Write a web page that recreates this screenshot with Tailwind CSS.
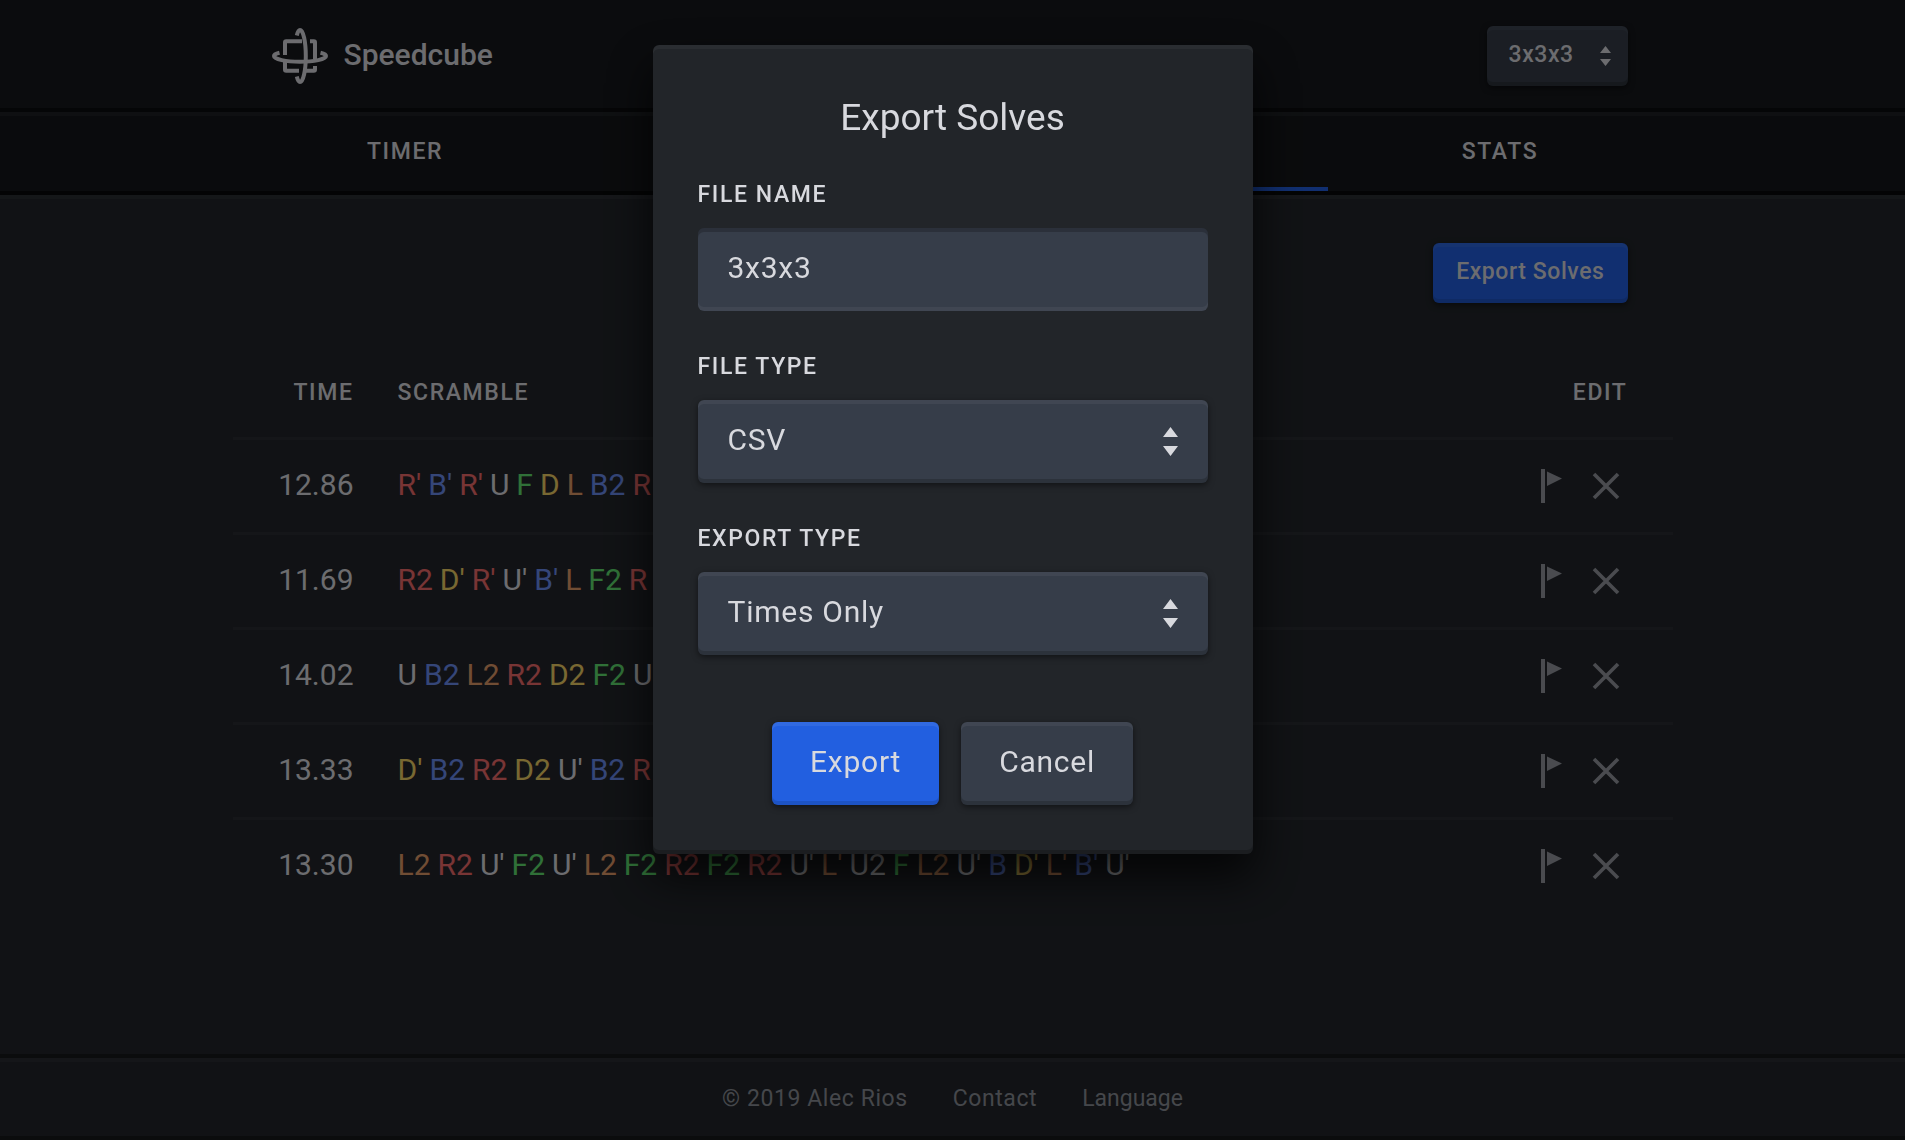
<!DOCTYPE html>
<html lang="en">
<head>
<meta charset="utf-8">
<meta name="viewport" content="width=device-width, initial-scale=1">
<title>Speedcube</title>
<script src="https://cdn.jsdelivr.net/npm/@tailwindcss/browser@4"></script>
</head>
<body class="bg-[#22252a] font-[Roboto,sans-serif] text-[#d8d9de]">
<div class="flex min-h-screen flex-col">
  <header class="h-28 bg-[#16181c] shadow-[inset_0_-4px_0_#0b0c0e]">
    <div class="mx-auto flex h-full max-w-[1440px] items-center justify-between pr-[45px] pl-[39px]">
      <a href="#" class="flex items-center gap-4">
        <svg class="size-14" viewBox="10 8 56 56" fill="none" stroke="currentColor" stroke-width="4" aria-hidden="true">
          <path d="M34.8 15.5C35.6 12 36.6 10 38 10C41.3 10 43.8 22 43.8 36C43.8 50 41.3 62 38 62C36.6 62 35.6 60 34.8 56.5"/>
          <path d="M17.5 32.8C14 33.6 12 34.6 12 36C12 39.3 24 41.8 38 41.8C52 41.8 64 39.3 64 36C64 34.6 62 33.6 58.5 32.8"/>
          <path d="M23 35V22.5Q23 21.3 24.2 21.3H40"/>
          <path d="M48 21.3H51.8Q53 21.3 53 22.5V39"/>
          <path d="M53 46V49.5Q53 50.7 51.8 50.7H43"/>
          <path d="M23 42V49.5Q23 50.7 24.2 50.7H37"/>
        </svg>
        <span class="pb-0.5 text-[30px] leading-10 font-medium">Speedcube</span>
      </a>
      <div class="relative">
        <select aria-label="Puzzle" class="block h-[60px] w-[141px] appearance-none rounded-md bg-[#363d49] pr-10 pb-0.5 pl-[22px] text-[23px] font-medium tracking-wide shadow-[inset_0_4px_0_#ffffff0a,inset_0_-4px_0_#0000002e,0_2px_6px_#00000080]"><option>3x3x3</option></select>
        <svg class="pointer-events-none absolute top-5 right-[17px] h-5 w-[11px]" viewBox="0 0 11 20" fill="currentColor" aria-hidden="true"><path d="M0 7L5.500 0L11 7ZM0 13L5.500 20L11 13Z"/></svg>
      </div>
    </div>
  </header>
  <nav class="h-[83px] bg-[#15171a] shadow-[inset_0_4px_0_#1e2124,inset_0_-4px_0_#08090a]">
    <div class="mx-auto grid h-full max-w-[1440px] grid-cols-[23fr_25fr_25fr_23fr] text-[23px] font-medium tracking-[0.07em] uppercase">
      <a href="#" class="flex items-center justify-center pb-0.5">Timer</a>
      <a href="#" class="flex items-center justify-center pb-0.5">Sessions</a>
      <a href="#" aria-current="page" class="mb-1 flex items-center justify-center border-b-4 border-[#225fe0]">Solves</a>
      <a href="#" class="flex items-center justify-center pb-0.5">Stats</a>
    </div>
  </nav>
  <main class="grow shadow-[inset_0_4px_0_#2b2e33]">
    <div class="mx-auto max-w-[1440px] pt-12">
      <div class="flex justify-end pr-[45px]">
        <button class="h-[60px] rounded-md bg-[#225fe0] px-[23px] pb-0.5 text-[23px] font-medium tracking-wide shadow-[inset_0_4px_0_#ffffff0d,inset_0_-4px_0_#0000001a,0_2px_6px_#00000080]">Export Solves</button>
      </div>
      <table class="mt-11 w-full text-left">
        <thead>
          <tr class="h-[91px] text-[23px] tracking-[0.07em] uppercase">
            <th class="w-[143px] pt-0.5 pr-[22px] text-right font-medium">Time</th>
            <th class="pt-0.5 pl-[22px] font-medium">Scramble</th>
            <th class="w-[180px] pt-0.5 pr-[45px] text-right font-medium">Edit</th>
          </tr>
        </thead>
        <tbody id="solves" class="text-[30px] leading-10"></tbody>
      </table>
    </div>
  </main>
  <footer class="flex h-[86px] items-center justify-center gap-[45px] pt-1 text-[23px] text-[#8b8e96] shadow-[inset_0_4px_0_#16181b,inset_0_8px_0_#2b2d33,inset_0_-4px_0_#16181b]">
    <span class="tracking-wide">© 2019 Alec Rios</span>
    <a href="#" class="tracking-wide">Contact</a>
    <a href="#">Language</a>
  </footer>
</div>

<div class="fixed inset-0 flex items-start justify-center bg-black/50 pt-[45px]">
  <form role="dialog" aria-modal="true" aria-labelledby="export-title" class="flex w-[600px] flex-col rounded-md bg-[#222529] px-[45px] py-[49px] shadow-[inset_0_4px_0_#ffffff0a,inset_0_-4px_0_#00000033,0_22px_45px_#000000bf]">
    <h2 id="export-title" class="text-center text-[37px] leading-[48px]">Export Solves</h2>
    <label for="name" class="mt-[34px] text-[23px] leading-[38px] font-medium tracking-[0.07em] uppercase">File name</label>
    <input id="name" value="3x3x3" class="mt-3.5 h-[83px] rounded-md bg-[#363d49] px-[30px] pb-1 text-[30px] tracking-wide shadow-[inset_0_4px_0_#00000033,inset_0_-4px_0_#ffffff0d]">
    <label for="type" class="mt-[37px] text-[23px] leading-[38px] font-medium tracking-[0.07em] uppercase">File type</label>
    <div class="relative mt-3.5">
      <select id="type" class="block h-[83px] w-full appearance-none rounded-md bg-[#363d49] px-[30px] pb-1 text-[30px] tracking-wide shadow-[inset_0_4px_0_#ffffff0d,inset_0_-4px_0_#0000002e,0_2px_6px_#00000080]"><option>CSV</option></select>
      <svg class="pointer-events-none absolute top-[27px] right-[30px] h-[29px] w-[15px]" viewBox="0 0 15 29" fill="currentColor" aria-hidden="true"><path d="M0 10L7.500 0L15 10ZM0 19L7.500 29L15 19Z"/></svg>
    </div>
    <label for="export" class="mt-[37px] text-[23px] leading-[38px] font-medium tracking-[0.07em] uppercase">Export type</label>
    <div class="relative mt-3.5">
      <select id="export" class="block h-[83px] w-full appearance-none rounded-md bg-[#363d49] px-[30px] pb-1 text-[30px] tracking-wide shadow-[inset_0_4px_0_#ffffff0d,inset_0_-4px_0_#0000002e,0_2px_6px_#00000080]"><option>Times Only</option></select>
      <svg class="pointer-events-none absolute top-[27px] right-[30px] h-[29px] w-[15px]" viewBox="0 0 15 29" fill="currentColor" aria-hidden="true"><path d="M0 10L7.500 0L15 10ZM0 19L7.500 29L15 19Z"/></svg>
    </div>
    <div class="mt-[67px] flex justify-center gap-[22px]">
      <button type="button" class="h-[83px] rounded-md bg-[#225fe0] px-[38px] pb-1 text-[30px] tracking-wide shadow-[inset_0_4px_0_#ffffff12,inset_0_-4px_0_#0000001f,0_2px_6px_#00000080]">Export</button>
      <button type="button" class="h-[83px] rounded-md bg-[#363d49] px-[38px] pb-1 text-[30px] tracking-wide shadow-[inset_0_4px_0_#ffffff0d,inset_0_-4px_0_#0000002e,0_2px_6px_#00000080]">Cancel</button>
    </div>
  </form>
</div>

<script>
  const solves = [
    ["12.86", "R' B' R' U F D L B2 R"],
    ["11.69", "R2 D' R' U' B' L F2 R"],
    ["14.02", "U B2 L2 R2 D2 F2 U'"],
    ["13.33", "D' B2 R2 D2 U' B2 R"],
    ["13.30", "L2 R2 U' F2 U' L2 F2 R2 F2 R2 U' L' U2 F L2 U' B D' L' B' U'"]
  ];
  const faces = { R: "text-[#f06a6a]", B: "text-[#6a8cf0]", U: "", F: "text-[#60e070]", D: "text-[#f0d064]", L: "text-[#e09a68]" };
  document.getElementById("solves").innerHTML = solves.map(([time, moves]) => `
    <tr class="h-[95px] border-t-3 border-[#2a2d32]">
      <td class="pr-[22px] pb-0.5 text-right">${time}</td>
      <td class="pb-0.5 pl-[22px]"><div class="flex gap-[7px]">${moves.split(" ").map(m => `<span class="${faces[m[0]]}">${m}</span>`).join(" ")}</div></td>
      <td class="pr-[53px]">
        <div class="flex items-center justify-end gap-[30px] text-[#94969f]">
          <button aria-label="Flag"><svg class="h-[34px] w-[21px]" viewBox="0 0 21 34" fill="currentColor"><path d="M0 0H4V34H0ZM6 2.500L21 9.500L6 17Z"/></svg></button>
          <button aria-label="Delete"><svg class="size-[28px]" viewBox="0 0 28 28" stroke="currentColor" stroke-width="3.600"><path d="M2 2L26 26M26 2L2 26"/></svg></button>
        </div>
      </td>
    </tr>`).join("");
</script>
</body>
</html>
